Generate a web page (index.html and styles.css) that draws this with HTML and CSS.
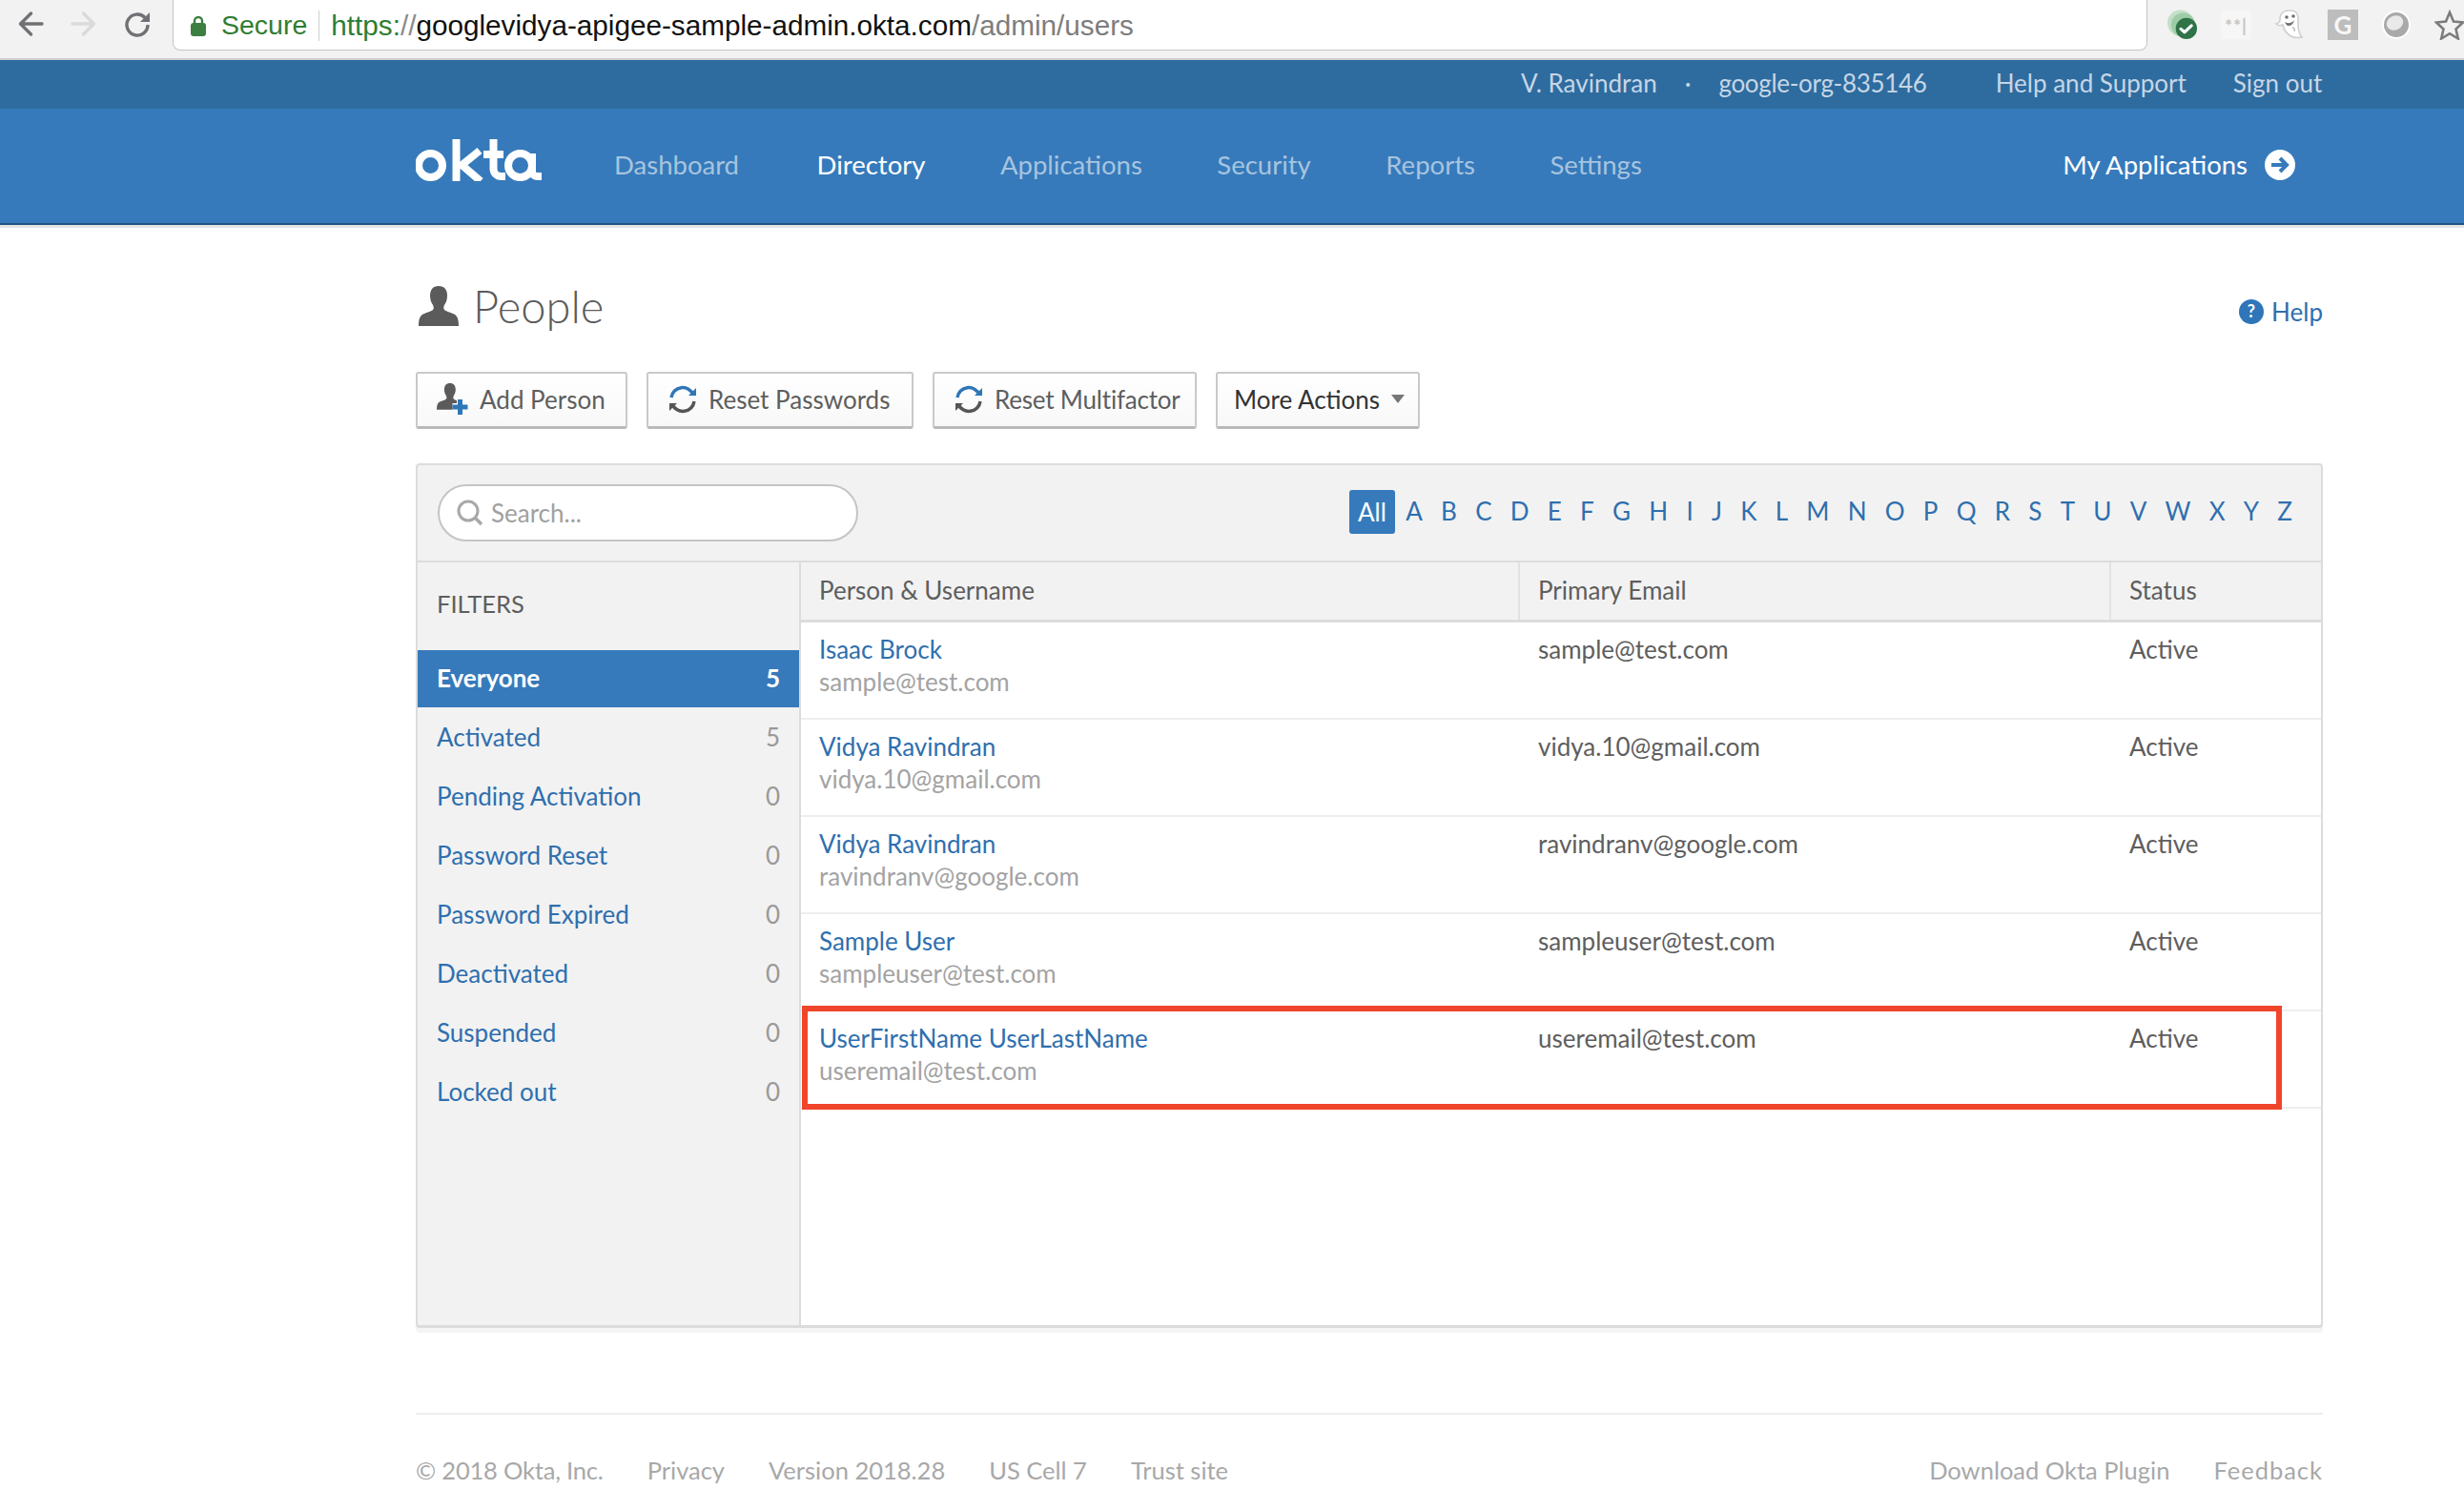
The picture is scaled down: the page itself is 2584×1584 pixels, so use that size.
FILE: index.html
```html
<!DOCTYPE html>
<html lang="en">
<head>
<meta charset="utf-8">
<title>People</title>
<link rel="stylesheet" href="styles.css">
</head>
<body>
<div class="browser">
  <svg class="bicon back" viewBox="0 0 28 28"><path d="M26 14H4M14.500 3L3.500 14l11 11" fill="none" stroke="#707174" stroke-width="3.400" stroke-linecap="round" stroke-linejoin="round"/></svg>
  <svg class="bicon fwd" viewBox="0 0 28 28"><path d="M2 14h22M13.500 3l11 11-11 11" fill="none" stroke="#dadada" stroke-width="3.400" stroke-linecap="round" stroke-linejoin="round"/></svg>
  <svg class="bicon reload" viewBox="0 0 28 28"><path d="M22 7.500a11 11 0 1 0 3 7.500" fill="none" stroke="#707174" stroke-width="3.400"/><path d="M27 2v10H17z" fill="#707174"/></svg>
  <div class="omnibox">
    <svg class="lock" viewBox="0 0 18 24"><path d="M5 10V7a4 4 0 0 1 8 0v3" fill="none" stroke="#3c7f40" stroke-width="2.400"/><rect x="1" y="9" width="16" height="14" rx="3" fill="#3c7f40"/></svg>
    <span class="secure">Secure</span>
    <span class="omnisep"></span>
    <span class="url"><span class="https">https:</span><span class="slashes">//</span><span class="host">googlevidya-apigee-sample-admin.okta.com</span><span class="path">/admin/users</span></span>
  </div>
  <div class="exts">
    <svg class="ext" viewBox="0 0 33 32"><circle cx="14" cy="14" r="14" fill="#c3dfc7"/><circle cx="17" cy="16" r="13" fill="#9fcca8"/><circle cx="20.500" cy="20" r="11.500" fill="#2f7347"/><path d="M14.500 20.500l4 3.500 7.500-7" fill="none" stroke="#fff" stroke-width="3.200" stroke-linecap="round" stroke-linejoin="round"/></svg>
    <span class="ext-star">**|</span>
    <svg class="ext" viewBox="0 0 32 32"><path d="M8 4C11 .5 20 0 23 3c3 3 2 9 2 13 0 5 1 9 4 13-5 1-9 1-13-2-4-3-6-6-7-11-2 1-5 1-7-1 2 0 4-2 4-4 0-3 0-5 2-7z" fill="#fff" stroke="#cfcfcf" stroke-width="1.600"/><circle cx="13" cy="8" r="1.800" fill="#6f6f6f"/><circle cx="20" cy="7" r="1.800" fill="#6f6f6f"/><path d="M11 13c3 2 7 2 10-2-1 4-3 6-6 6-2 0-3-2-4-4z" fill="#6f6f6f"/><path d="M19 19c2 0 3 2 2 4" fill="none" stroke="#bdbdbd" stroke-width="1.600"/></svg>
    <span class="ext-g">G</span>
    <svg class="ext" viewBox="0 0 32 32"><circle cx="16" cy="16" r="15" fill="#fff"/><circle cx="16" cy="16" r="13" fill="#a9a9a9"/><ellipse cx="14.500" cy="14" rx="9" ry="7.500" fill="#e9e9e9" transform="rotate(-25 14.500 14)"/></svg>
    <svg class="ext" viewBox="0 0 32 32"><path d="M16 3l4 9.500 10 1-7.500 7 2.300 10L16 25.200 7.200 30.500l2.300-10L2 13.500l10-1z" fill="none" stroke="#7c7c7c" stroke-width="2.600"/></svg>
  </div>
</div>

<div class="topbar">
  <span class="user">V. Ravindran</span>
  <span class="dot">·</span>
  <span class="org">google-org-835146</span>
  <a class="toplink help-support">Help and Support</a>
  <a class="toplink">Sign out</a>
</div>

<nav class="nav">
  <svg class="logo" viewBox="0 0 132 44" role="img" aria-label="okta">
    <g fill="none" stroke="#fff" stroke-width="8">
      <circle cx="15.500" cy="27.500" r="12.500"/>
      <path d="M42.500 0V44M46 29L67 12M47 26L68 44"/>
      <path d="M81.500 0V31a8 8 0 0 0 8 8H94M71 16H92"/>
      <circle cx="109.500" cy="27.500" r="12.500"/>
      <path d="M122 15V34a5 5 0 0 0 5 5H132"/>
    </g>
  </svg>
  <a class="navlink first">Dashboard</a>
  <a class="navlink active">Directory</a>
  <a class="navlink">Applications</a>
  <a class="navlink">Security</a>
  <a class="navlink">Reports</a>
  <a class="navlink">Settings</a>
  <a class="myapps">My Applications
    <svg class="myapps-icon" viewBox="0 0 32 32"><circle cx="16" cy="16" r="16" fill="#fff"/><path d="M7 16h15M16 9l7 7-7 7" fill="none" stroke="#367abb" stroke-width="4"/></svg>
  </a>
</nav>

<main class="page">
  <header class="head">
    <svg class="person-icon" viewBox="0 0 42 42"><path d="M21 0c6 0 9 4 9 10 0 4-1 7-3 10-1 2-1 4 0 5 2 2 8 3 11 5 3 2 4 6 4 12H0c0-6 1-10 4-12 3-2 9-3 11-5 1-1 1-3 0-5-2-3-3-6-3-10 0-6 3-10 9-10z" fill="#5b5b5b"/></svg>
    <h1 class="title">People</h1>
    <a class="help">
      <svg class="help-icon" viewBox="0 0 26 26"><circle cx="13" cy="13" r="13" fill="#2f76b8"/><text x="13" y="19" text-anchor="middle" class="help-q">?</text></svg>
      Help
    </a>
  </header>

  <div class="actions">
    <button class="btn btn-add">
      <svg class="btn-ico-add" viewBox="0 0 33 33"><g transform="scale(.66)"><path d="M21 0c6 0 9 4 9 10 0 4-1 7-3 10-1 2-1 4 0 5 2 2 8 3 11 5 3 2 4 6 4 12H0c0-6 1-10 4-12 3-2 9-3 11-5 1-1 1-3 0-5-2-3-3-6-3-10 0-6 3-10 9-10z" fill="#5b5b5b"/></g><path d="M24.500 16.500v16M16.500 24.500h16" stroke="#fff" stroke-width="7"/><path d="M24.500 17v16M16.500 25h16" stroke="#2f76b8" stroke-width="5"/></svg>
      Add Person
    </button>
    <button class="btn btn-pass">
      <svg class="btn-ico" viewBox="0 0 30 30"><path d="M3 13A12 12 0 0 1 26 10" fill="none" stroke="#2f76b8" stroke-width="3.500"/><path d="M21 11h8V3z" fill="#2f76b8"/><path d="M27 17A12 12 0 0 1 4 20" fill="none" stroke="#555" stroke-width="3.500"/><path d="M9 19H1v8z" fill="#555"/></svg>
      Reset Passwords
    </button>
    <button class="btn btn-multi">
      <svg class="btn-ico" viewBox="0 0 30 30"><path d="M3 13A12 12 0 0 1 26 10" fill="none" stroke="#2f76b8" stroke-width="3.500"/><path d="M21 11h8V3z" fill="#2f76b8"/><path d="M27 17A12 12 0 0 1 4 20" fill="none" stroke="#555" stroke-width="3.500"/><path d="M9 19H1v8z" fill="#555"/></svg>
      Reset Multifactor
    </button>
    <button class="btn btn-more">More Actions <span class="caret"></span></button>
  </div>

  <section class="panel">
    <div class="toolbar">
      <div class="search">
        <svg class="search-ico" viewBox="0 0 28 28"><circle cx="12" cy="12" r="10" fill="none" stroke="#a8a8a8" stroke-width="3"/><path d="M19 19l7 7" stroke="#a8a8a8" stroke-width="3.500"/></svg>
        <span class="placeholder">Search...</span>
      </div>
      <div class="alpha">
        <a class="all">All</a><a>A</a><a>B</a><a>C</a><a>D</a><a>E</a><a>F</a><a>G</a><a>H</a><a>I</a><a>J</a><a>K</a><a>L</a><a>M</a><a>N</a><a>O</a><a>P</a><a>Q</a><a>R</a><a>S</a><a>T</a><a>U</a><a>V</a><a>W</a><a>X</a><a>Y</a><a>Z</a>
      </div>
    </div>
    <div class="body">
      <aside class="filters">
        <div class="filters-title">FILTERS</div>
        <a class="filter on"><span>Everyone</span><span>5</span></a>
        <a class="filter"><span>Activated</span><span class="n">5</span></a>
        <a class="filter"><span>Pending Activation</span><span class="n">0</span></a>
        <a class="filter"><span>Password Reset</span><span class="n">0</span></a>
        <a class="filter"><span>Password Expired</span><span class="n">0</span></a>
        <a class="filter"><span>Deactivated</span><span class="n">0</span></a>
        <a class="filter"><span>Suspended</span><span class="n">0</span></a>
        <a class="filter"><span>Locked out</span><span class="n">0</span></a>
      </aside>
      <div class="table">
        <div class="row thead"><div class="c1">Person &amp; Username</div><div class="c2">Primary Email</div><div class="c3">Status</div></div>
        <div class="row"><div class="c1"><a class="name">Isaac Brock</a><div class="uname">sample@test.com</div></div><div class="c2">sample@test.com</div><div class="c3">Active</div></div>
        <div class="row"><div class="c1"><a class="name">Vidya Ravindran</a><div class="uname">vidya.10@gmail.com</div></div><div class="c2">vidya.10@gmail.com</div><div class="c3">Active</div></div>
        <div class="row"><div class="c1"><a class="name">Vidya Ravindran</a><div class="uname">ravindranv@google.com</div></div><div class="c2">ravindranv@google.com</div><div class="c3">Active</div></div>
        <div class="row"><div class="c1"><a class="name">Sample User</a><div class="uname">sampleuser@test.com</div></div><div class="c2">sampleuser@test.com</div><div class="c3">Active</div></div>
        <div class="row"><div class="c1"><a class="name">UserFirstName UserLastName</a><div class="uname">useremail@test.com</div></div><div class="c2">useremail@test.com</div><div class="c3">Active</div></div>
        <div class="highlight"></div>
      </div>
    </div>
  </section>

  <footer class="footer">
    <span class="copy">© 2018 Okta, Inc.</span><a>Privacy</a><span>Version 2018.28</span><span>US Cell 7</span><a>Trust site</a>
    <a class="foot-right">Download Okta Plugin</a><a class="feedback">Feedback</a>
  </footer>
</main>
</body>
</html>
```
FILE: styles.css
```css
* { box-sizing: border-box; }
html, body { margin: 0; padding: 0; background: #fff; height: 1584px; overflow: hidden; }
body { font-family: "Lato", "Open Sans", sans-serif; font-size: 26px; color: #5e5e5e; }
a { color: #2f6fae; }

.browser { height: 63px; background: #f2f2f2; border-bottom: 2px solid #cfcfcf; display: flex; align-items: flex-start; position: relative; }
.bicon { width: 28px; height: 28px; margin-top: 11px; flex: none; }
.back { margin-left: 18px; }
.fwd { margin-left: 28px; }
.reload { margin-left: 28px; }
.omnibox { width: 2071px; height: 53px; margin-left: 23px; background: #fff; border: 1px solid #c4c4c4; border-top: 0; border-radius: 0 0 8px 8px; display: flex; align-items: center; flex: none; font-family: "Liberation Sans", sans-serif; padding-top: 1px; }
.lock { width: 18px; height: 24px; margin-left: 17px; flex: none; }
.secure { color: #2f7d32; font-size: 28.5px; margin-left: 15px; }
.omnisep { width: 1px; height: 32px; background: #cfcfcf; margin: 0 12px; }
.url { font-size: 29.7px; color: #7d7d7d; }
.https { color: #2f7d32; }
.slashes { color: #8a8a8a; }
.host { color: #111; }
.exts { display: flex; align-items: center; margin-left: 21px; margin-top: 10px; gap: 24px; height: 32px; }
.ext { width: 32px; height: 32px; flex: none; }
.ext-star { width: 32px; height: 30px; background: #f6f6f6; color: #c4c4c4; font-size: 19px; line-height: 32px; font-weight: 700; letter-spacing: 1px; text-align: center; }
.ext-g { width: 32px; height: 32px; background: #bdbdbd; color: #f7f7f7; font-weight: 700; font-size: 26px; line-height: 32px; text-align: center; }

.topbar { height: 51px; background: #2e6c9f; color: #c6d6e6; padding-left: 1595px; padding-bottom: 3px; display: flex; align-items: center; }
.dot { margin-left: 29px; margin-right: 29px; }
.org { letter-spacing: -0.3px; }
.toplink { color: #c6d6e6; }
.help-support { margin-left: 72px; margin-right: 49px; }

.nav { height: 122px; background: #367abb; border-bottom: 2px solid #1f5484; box-shadow: 0 3px 0 #e4e4e4; padding-left: 436px; padding-bottom: 3px; display: flex; align-items: center; font-size: 27.5px; }
.logo { width: 132px; height: 44px; margin-right: 76px; margin-bottom: 9px; flex: none; }
.navlink { color: #a7c4df; margin-right: 78.5px; }
.navlink.first { margin-right: 81.5px; }
.navlink.active { color: #fff; }
.myapps { color: #fff; margin-left: auto; margin-right: 177px; display: flex; align-items: center; gap: 18px; }
.myapps-icon { width: 32px; height: 32px; }

.page { margin-left: 436px; width: 2000px; }
.head { display: flex; align-items: center; height: 154px; padding-left: 3px; padding-top: 15px; }
.person-icon { width: 42px; height: 42px; }
.title { font-weight: 300; font-size: 47px; color: #5b5b5b; margin: 0 0 0 15px; }
.help { margin-left: auto; display: flex; align-items: center; gap: 8px; margin-top: 12px; }
.help-icon { width: 26px; height: 26px; }
.help-q { fill: #fff; font-size: 18px; font-weight: 700; }

.actions { display: flex; gap: 20px; }
.btn { height: 60px; background: linear-gradient(#fff, #f8f8f8); border: 2px solid #c9c9c9; border-bottom: 3px solid #b9b9b9; border-radius: 3px; display: flex; align-items: center; font: inherit; color: #5e5e5e; padding: 0 0 2px; }
.btn-add { width: 222px; padding-left: 20px; gap: 12px; }
.btn-pass { width: 280px; padding-left: 21px; gap: 12px; }
.btn-multi { width: 277px; padding-left: 21px; gap: 12px; letter-spacing: -0.2px; }
.btn-more { width: 214px; padding-left: 17px; gap: 12px; color: #333; }
.btn-ico-add { width: 33px; height: 33px; }
.btn-ico { width: 30px; height: 30px; }
.caret { width: 0; height: 0; border: 7px solid transparent; border-top: 9px solid #777; border-bottom: 0; }

.panel { margin-top: 36px; height: 907px; border: 2px solid #dcdcdc; border-radius: 4px; background: #f2f2f2; box-shadow: 0 5px 0 #f4f4f4; display: flex; flex-direction: column; border-bottom-width: 3px; }
.toolbar { height: 102px; border-bottom: 2px solid #dcdcdc; display: flex; padding-left: 21px; padding-top: 20px; flex: none; }
.search { width: 441px; height: 60px; background: #fff; border: 2px solid #c4c4c4; border-radius: 30px; display: flex; align-items: center; padding-left: 18px; gap: 8px; }
.search-ico { width: 28px; height: 28px; }
.placeholder { color: #a0a0a0; }
.alpha { display: flex; margin-left: auto; margin-right: 30px; align-items: center; height: 46px; margin-top: 6px; gap: 19.26px; line-height: 42px; }
.alpha a { color: #2f6fae; margin-bottom: 3px; }
.alpha .all { background: #367abb; color: #fff; width: 48px; height: 46px; line-height: 46px; text-align: center; border-radius: 3px; margin: 0 -8px 0 0; }

.body { flex: 1; display: flex; min-height: 0; }
.filters { width: 402px; border-right: 2px solid #dcdcdc; flex: none; }
.filters-title { height: 92px; padding: 28px 20px 0; color: #5e5e5e; font-size: 25.5px; }
.filter { height: 60px; margin-bottom: 2px; display: flex; justify-content: space-between; align-items: center; padding: 0 20px 2px; }
.filter.on { background: #367abb; color: #fff; font-weight: 700; }
.n { color: #999; }

.table { flex: 1; background: #fff; position: relative; border-radius: 0 0 3px 0; }
.row { display: grid; grid-template-columns: 754px 620px 1fr; height: 102px; border-bottom: 2px solid #eee; background: #fff; }
.row > div { padding: 11px 20px 0 19px; line-height: 34px; }
.thead { height: 63px; background: #f2f2f2; border-bottom: 3px solid #dcdcdc; }
.thead > div { padding: 12px 20px 0 19px; }
.thead .c1, .thead .c2 { border-right: 2px solid #e2e2e2; }
.name { display: block; }
.uname { color: #a3a3a3; }
.highlight { position: absolute; left: 1px; top: 465px; width: 1552px; height: 109px; border: 6px solid #f0452a; pointer-events: none; }

.footer { margin-top: 89px; border-top: 2px solid #eee; padding-top: 43px; display: flex; gap: 46px; color: #a8a8a8; font-size: 25.5px; }
.footer a { color: #a8a8a8; }
.copy { letter-spacing: -0.2px; }
.foot-right { margin-left: auto; }
.feedback { letter-spacing: 1px; }
```
